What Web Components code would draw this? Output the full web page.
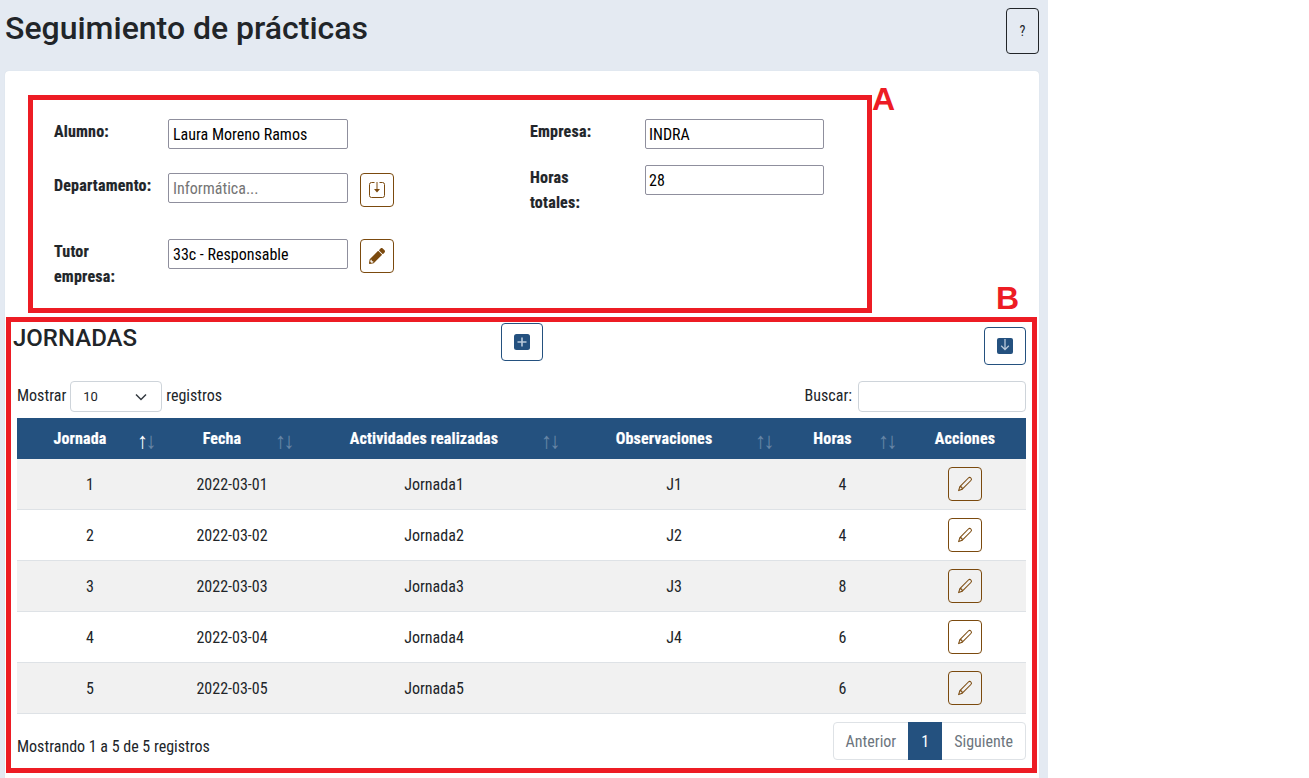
<!DOCTYPE html>
<html lang="es">
<head>
<meta charset="utf-8">
<title>Seguimiento de prácticas</title>
<style>
  html, body { margin: 0; background: #fff; height: 100%; overflow: hidden; }
  body { font-family: Roboto, "Liberation Sans", sans-serif; font-stretch: 75%; color: #212529; }
</style>
</head>
<body>
<practice-page>
  <page-header slot="header" title="Seguimiento de prácticas"></page-header>

  <form-panel slot="body">
    <form-field slot="left" gap="24" value="Laura Moreno Ramos"><span slot="label">Alumno:</span></form-field>
    <form-field slot="left" gap="32" placeholder="Informática...">
      <span slot="label">Departamento:</span>
      <icon-button slot="action" tone="brown" icon="import"></icon-button>
    </form-field>
    <form-field slot="left" gap="0" value="33c - Responsable">
      <span slot="label">Tutor<br>empresa:</span>
      <icon-button slot="action" tone="brown" icon="pencil-fill"></icon-button>
    </form-field>
    <form-field slot="right" gap="16" value="INDRA"><span slot="label">Empresa:</span></form-field>
    <form-field slot="right" gap="0" value="28"><span slot="label">Horas<br>totales:</span></form-field>
  </form-panel>

  <jornadas-section slot="body"></jornadas-section>
</practice-page>

<note-box style="left:28px;top:95px;width:844px;height:218px" letter="A" place="a"></note-box>
<note-box style="left:6px;top:317px;width:1031px;height:456px" letter="B" place="b"></note-box>

<script>
// Icon paths shared by the buttons
const ICONS = {
  import: `<svg width="16" height="16" viewBox="0 0 16 16" fill="none"><path d="M5.5 .5H2.5a2 2 0 0 0-2 2v11a2 2 0 0 0 2 2h11a2 2 0 0 0 2-2v-11a2 2 0 0 0-2-2h-3" stroke="currentColor"/><path d="M8 0v8" stroke="currentColor" stroke-width="1.4" opacity=".7"/><path d="M5 7h6L8 10.5z" fill="currentColor"/></svg>`,
  'pencil-fill': `<svg width="16" height="16" viewBox="0 0 512 512" fill="currentColor"><path d="M497.9 142.1l-46.1 46.1c-4.7 4.7-12.3 4.7-17 0l-111-111c-4.7-4.7-4.7-12.3 0-17l46.1-46.1c18.7-18.7 49.1-18.7 67.9 0l60.1 60.1c18.8 18.7 18.8 49.1 0 67.9zM284.2 99.8L21.6 362.4.4 483.9c-2.9 16.4 11.4 30.6 27.8 27.8l121.5-21.3 262.6-262.6c4.7-4.7 4.7-12.3 0-17l-111-111c-4.8-4.7-12.4-4.7-17.1 0zM88 424h48v36.3l-64.5 11.3-31.1-31.1L51.7 376H88v48z"/></svg>`,
  pencil: `<svg width="16" height="16" viewBox="0 0 16 16" fill="none" stroke="currentColor" stroke-width="1.05"><path d="M11.4 2a1.7 1.7 0 0 1 2.5 2.5L5.3 13.2 1.6 14.6 2.9 10.6z" stroke-linejoin="round"/><path d="M2.9 10.6c1.3 0 2.4 1.1 2.4 2.6"/></svg>`,
  plus: `<svg width="16" height="16" viewBox="0 0 16 16"><rect width="16" height="16" rx="2.5" fill="currentColor"/><path d="M8 3.5v9M3.5 8h9" stroke="#b9c9da" stroke-width="1.6"/></svg>`,
  down: `<svg width="16" height="16" viewBox="0 0 16 16"><rect width="16" height="16" rx="2" fill="currentColor"/><path d="M8 1v10.5M4.2 7.8 8 11.6l3.8-3.8" fill="none" stroke="#b9c9da" stroke-width="1.3"/></svg>`
}

customElements.define('practice-page', class extends HTMLElement {
  constructor () {
    super()
    this.attachShadow({ mode: 'open' }).innerHTML = `
      <style>
        :host { display: block; width: 1048px; height: 778px; background: #e4eaf2; overflow: hidden; }
        .card { margin: 0 9px 0 5px; background: #fff; border-radius: 4px 4px 0 0; box-shadow: 0 0 1px #c9d1dc; height: 707px; }
      </style>
      <slot name="header"></slot>
      <div class="card"><slot name="body"></slot></div>
    `
  }
})

customElements.define('page-header', class extends HTMLElement {
  constructor () {
    super()
    this.attachShadow({ mode: 'open' }).innerHTML = `
      <style>
        :host { display: flex; justify-content: space-between; height: 71px; padding: 8px 9px 0 5px; box-sizing: border-box; }
        h1 { margin: 0; font-size: 32px; line-height: 40px; font-weight: 500; font-stretch: 100%; color: #212529; }
        button { width: 33px; height: 46px; padding: 0; background: transparent; border: 1px solid #212529; border-radius: 4px; font: inherit; font-size: 14px; color: #212529; }
      </style>
      <h1>${this.getAttribute('title')}</h1>
      <button>?</button>
    `
  }
})

customElements.define('form-panel', class extends HTMLElement {
  constructor () {
    super()
    this.attachShadow({ mode: 'open' }).innerHTML = `
      <style>
        :host { display: grid; grid-template-columns: 476px 1fr; padding: 48px 0 34px 49px; }
        div { min-width: 0; }
        .left { --label: 102px; --box: 180px; --pad: 4px; }
        .right { --label: 103px; --box: 179px; --pad: 3px; }
      </style>
      <div class="left"><slot name="left"></slot></div>
      <div class="right"><slot name="right"></slot></div>
    `
  }
})

customElements.define('form-field', class extends HTMLElement {
  constructor () {
    super()
    const value = this.getAttribute('value')
    const text = value ?? this.getAttribute('placeholder')
    this.attachShadow({ mode: 'open' }).innerHTML = `
      <style>
        :host { display: grid; grid-template-columns: var(--label) var(--box) auto; column-gap: 12px; justify-content: start; align-items: start; margin-bottom: ${this.getAttribute('gap')}px; }
        .label { font-size: 16px; line-height: 25px; font-weight: 700; letter-spacing: .2px; -webkit-text-stroke: .2px #212529; color: #212529; white-space: nowrap; }
        .box { height: 30px; box-sizing: border-box; border: 1px solid #8f8f9d; border-radius: 2px; padding: 0 var(--pad); font-size: 16px; line-height: 30px; background: #fff; color: ${value === null ? '#757575' : '#000'}; white-space: nowrap; overflow: hidden; }
      </style>
      <div class="label"><slot name="label"></slot></div>
      <div class="box">${text}</div>
      <slot name="action"></slot>
    `
  }
})

customElements.define('icon-button', class extends HTMLElement {
  constructor () {
    super()
    const wide = this.hasAttribute('wide')
    const color = this.getAttribute('tone') === 'blue' ? '#24517f' : '#7b4a0e'
    this.attachShadow({ mode: 'open' }).innerHTML = `
      <style>
        :host { display: inline-flex; align-items: center; justify-content: center; box-sizing: border-box; width: ${wide ? 42 : 34}px; height: ${wide ? 38 : 34}px; border: 1px solid ${color}; border-radius: 4px; color: ${color}; background: transparent; }
        svg { display: block; }
      </style>
      ${ICONS[this.getAttribute('icon')]}
    `
  }
})

customElements.define('jornadas-section', class extends HTMLElement {
  constructor () {
    super()
    this.attachShadow({ mode: 'open' }).innerHTML = `
      <style>
        :host { display: block; padding: 0 13px 0 12px; }
        .top { display: grid; grid-template-columns: 1fr auto 1fr; height: 58px; align-items: start; }
        h2 { margin: 0 0 0 -4px; font-size: 24px; line-height: 30px; font-weight: 500; font-stretch: 100%; color: #212529; }
        .down { justify-self: end; margin-top: 4px; }
        .tools { display: flex; justify-content: space-between; align-items: center; height: 31px; margin-bottom: 6px; font-size: 16px; line-height: 29px; }
        .tools > div { display: flex; align-items: flex-start; gap: 4px; }
        .select { box-sizing: border-box; width: 92px; height: 31px; border: 1px solid #ced4da; border-radius: 4px; display: flex; align-items: center; justify-content: space-between; padding: 0 14px 0 12px; font-size: 13px; font-stretch: 100%; }
        .search { box-sizing: border-box; width: 168px; height: 31px; margin-left: 2px; border: 1px solid #ced4da; border-radius: 4px; }
        table { width: 1009px; border-collapse: collapse; table-layout: fixed; font-size: 16px; }
        th { position: relative; height: 41px; padding: 0 20px 0 0; background: #24517f; color: #fff; font-weight: 700; letter-spacing: .15px; -webkit-text-stroke: .2px #fff; }
        th.plain { padding: 0; }
        th .sort { position: absolute; right: 9px; top: 12px; font-weight: 400; font-size: 22px; line-height: 22px; letter-spacing: -2.5px; -webkit-text-stroke: 0; }
        .sort span { opacity: .3; }
        .sort span.on { opacity: 1; }
        td { height: 50px; padding: 0; text-align: center; border-bottom: 1px solid #dee2e6; }
        tbody tr:nth-child(odd) td { background: #f1f1f1; }
        td icon-button { vertical-align: middle; }
        .foot { display: flex; justify-content: space-between; align-items: flex-end; margin-top: 8px; }
        .info { line-height: 24px; margin-bottom: 1px; font-size: 16px; }
        .pages { display: flex; height: 38px; border: 1px solid #dee2e6; border-radius: 4px; box-sizing: border-box; color: #6c757d; font-size: 16px; line-height: 38px; }
        .pages span { padding: 0 12px; }
        .pages .cur { background: #24517f; color: #fff; margin: -1px 0; line-height: 40px; width: 34px; height: 38px; padding: 0; text-align: center; }
      </style>
      <div class="top">
        <h2>JORNADAS</h2>
        <icon-button wide tone="blue" icon="plus"></icon-button>
        <icon-button class="down" wide tone="blue" icon="down"></icon-button>
      </div>
      <div class="tools">
        <div>Mostrar <div class="select">10 <svg width="12" height="8" viewBox="0 0 12 8" fill="none" stroke="#343a40" stroke-width="1.5"><path d="M1 1.5l5 5 5-5"/></svg></div> registros</div>
        <div>Buscar: <div class="search"></div></div>
      </div>
      <table>
        <colgroup><col style="width:146px"><col style="width:138px"><col style="width:266px"><col style="width:214px"><col style="width:123px"><col style="width:122px"></colgroup>
        <thead><tr></tr></thead>
        <tbody></tbody>
      </table>
      <div class="foot">
        <div class="info">Mostrando 1 a 5 de 5 registros</div>
        <div class="pages"><span>Anterior</span><span class="cur">1</span><span>Siguiente</span></div>
      </div>
    `
    const heads = ['Jornada', 'Fecha', 'Actividades realizadas', 'Observaciones', 'Horas']
    const headRow = this.shadowRoot.querySelector('thead tr')
    heads.forEach((name, i) => {
      headRow.insertAdjacentHTML('beforeend', `<th>${name}<div class="sort"><span class="${i === 0 ? 'on' : ''}">↑</span><span>↓</span></div></th>`)
    })
    headRow.insertAdjacentHTML('beforeend', '<th class="plain">Acciones</th>')

    const rows = [
      [1, '2022-03-01', 'Jornada1', 'J1', 4],
      [2, '2022-03-02', 'Jornada2', 'J2', 4],
      [3, '2022-03-03', 'Jornada3', 'J3', 8],
      [4, '2022-03-04', 'Jornada4', 'J4', 6],
      [5, '2022-03-05', 'Jornada5', '', 6]
    ]
    const body = this.shadowRoot.querySelector('tbody')
    for (const row of rows) {
      const cells = row.map(v => `<td>${v}</td>`).join('')
      body.insertAdjacentHTML('beforeend', `<tr>${cells}<td><icon-button tone="brown" icon="pencil"></icon-button></td></tr>`)
    }
  }
})

customElements.define('note-box', class extends HTMLElement {
  constructor () {
    super()
    const isA = this.getAttribute('place') === 'a'
    this.attachShadow({ mode: 'open' }).innerHTML = `
      <style>
        :host { display: block; position: absolute; box-sizing: border-box; border: 5px solid #ed1c24; pointer-events: none; }
        b { position: absolute; font: 700 32px/32px "Liberation Sans", sans-serif; font-stretch: 100%; color: #ed1c24; ${isA ? 'left: calc(100% + 5px); top: -17px;' : 'right: 13px; top: -40px;'} }
      </style>
      <b>${this.getAttribute('letter')}</b>
    `
  }
})
</script>
</body>
</html>
